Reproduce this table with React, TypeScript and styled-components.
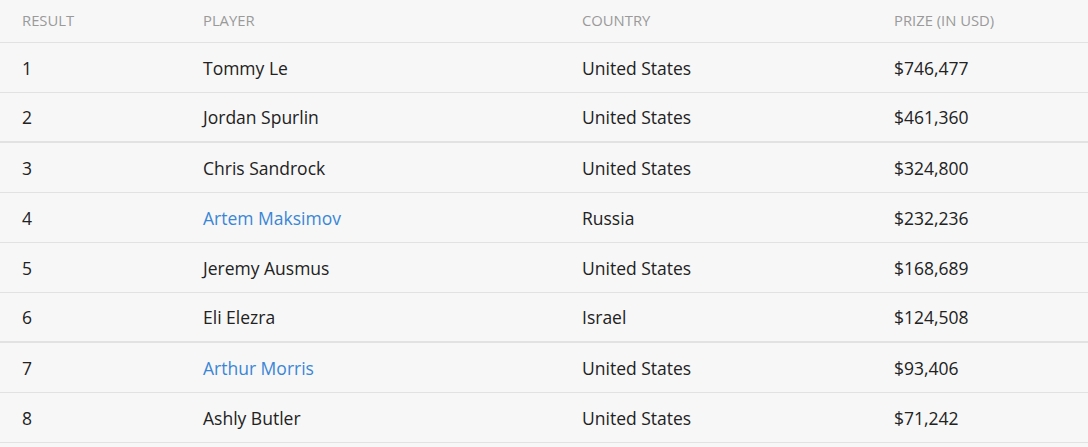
import React from 'react'
import styled, { createGlobalStyle } from 'styled-components'

const GlobalStyle = createGlobalStyle`
  html, body {
    margin: 0;
    padding: 0;
    background: #f7f7f7;
  }
  body {
    font-family: "Open Sans", "Liberation Sans", sans-serif;
    color: #222;
  }
`

const Table = styled.table`
  width: 1088px;
  border-collapse: collapse;
  table-layout: fixed;
`

const HeadCell = styled.th<{ $w: number }>`
  width: ${(p) => p.$w}px;
  height: 42px;
  padding: 0 0 2px 22px;
  text-align: left;
  font-weight: 400;
  font-size: 14.8px;
  color: #9a9a9a;
  text-transform: uppercase;
  border-bottom: 1px solid #e2e2e2;
  vertical-align: middle;
  box-sizing: border-box;
`

const Row = styled.tr<{ $thick?: boolean }>`
  height: 50px;
  border-bottom: ${(p) => (p.$thick ? '2px' : '1px')} solid #e2e2e2;
`

const Cell = styled.td`
  padding: 1px 0 0 22px;
  font-size: 17.5px;
  color: #222;
  vertical-align: middle;
`

const PlayerLink = styled.a`
  color: #3a86d6;
  text-decoration: none;
`

type Result = {
  place: number
  player: string
  linked?: boolean
  country: string
  prize: string
}

const results: Result[] = [
  { place: 1, player: 'Tommy Le', country: 'United States', prize: '$746,477' },
  { place: 2, player: 'Jordan Spurlin', country: 'United States', prize: '$461,360' },
  { place: 3, player: 'Chris Sandrock', country: 'United States', prize: '$324,800' },
  { place: 4, player: 'Artem Maksimov', linked: true, country: 'Russia', prize: '$232,236' },
  { place: 5, player: 'Jeremy Ausmus', country: 'United States', prize: '$168,689' },
  { place: 6, player: 'Eli Elezra', country: 'Israel', prize: '$124,508' },
  { place: 7, player: 'Arthur Morris', linked: true, country: 'United States', prize: '$93,406' },
  { place: 8, player: 'Ashly Butler', country: 'United States', prize: '$71,242' },
]

export default function App() {
  return (
    <>
      <GlobalStyle />
      <Table>
        <thead>
          <tr>
            <HeadCell $w={181}>Result</HeadCell>
            <HeadCell $w={379}>Player</HeadCell>
            <HeadCell $w={312}>Country</HeadCell>
            <HeadCell $w={216}>Prize (in USD)</HeadCell>
          </tr>
        </thead>
        <tbody>
          {results.map((r) => (
            <Row key={r.place} $thick={r.place === 2 || r.place === 6}>
              <Cell>{r.place}</Cell>
              <Cell>{r.linked ? <PlayerLink href="#">{r.player}</PlayerLink> : r.player}</Cell>
              <Cell>{r.country}</Cell>
              <Cell>{r.prize}</Cell>
            </Row>
          ))}
        </tbody>
      </Table>
    </>
  )
}
